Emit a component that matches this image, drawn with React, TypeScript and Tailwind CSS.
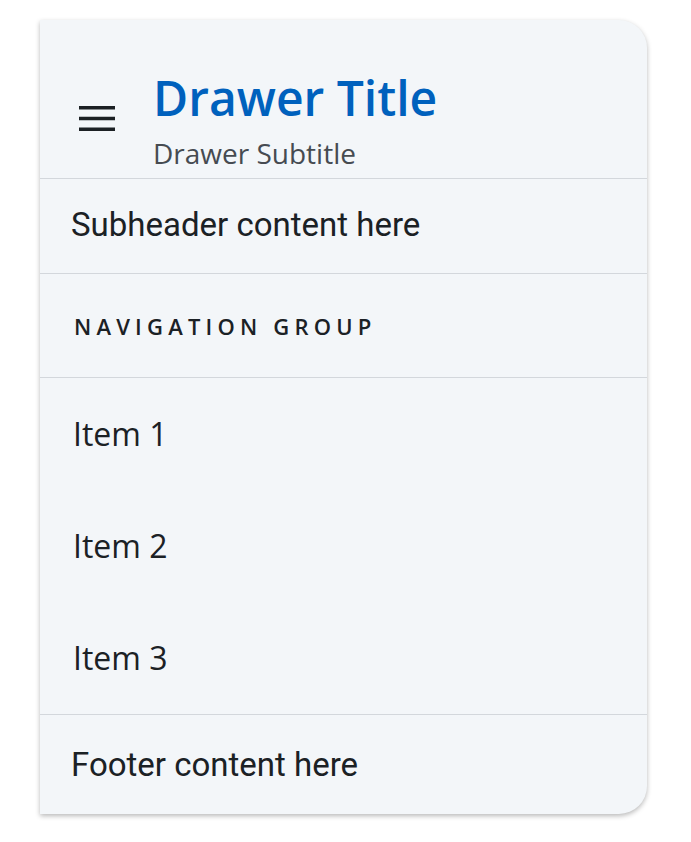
import React from "react";

function MenuIcon() {
  return (
    <svg width="36" height="25" viewBox="0 0 36 25" className="block">
      <rect x="0" y="0" width="36" height="3.5" fill="#1b2024" />
      <rect x="0" y="10.75" width="36" height="3.5" fill="#1b2024" />
      <rect x="0" y="21.5" width="36" height="3.5" fill="#1b2024" />
    </svg>
  );
}

export default function App() {
  const items = ["Item 1", "Item 2", "Item 3"];
  return (
    <div className="min-h-screen bg-white pt-[20px] pl-[40px]">
      <div className="w-[607px] bg-[#f3f6f9] rounded-r-[28px] shadow-[0_2px_5px_rgba(0,0,0,0.28)] flex flex-col">
        {/* Header */}
        <div className="flex items-start pt-[54px] pb-[11px] pl-[39px] border-b border-[#d3d7dc]">
          <div className="mt-[32px] mr-[38px]">
            <MenuIcon />
          </div>
          <div className="flex flex-col gap-[17px]">
            <div className="text-[48px] leading-none font-semibold text-[#0061bd] font-['Open_Sans',sans-serif]">
              Drawer Title
            </div>
            <div className="text-[28px] leading-none text-[#464b51] font-['Open_Sans',sans-serif]">
              Drawer Subtitle
            </div>
          </div>
        </div>
        {/* Subheader */}
        <div className="h-[95px] flex items-center pl-[31px] pb-[3px] border-b border-[#d3d7dc]">
          <span className="text-[33px] leading-none text-[#1b2125] font-['Roboto',sans-serif]">
            Subheader content here
          </span>
        </div>
        {/* Navigation group */}
        <div className="h-[104px] flex items-center pl-[34px] border-b border-[#d3d7dc]">
          <span className="text-[22px] leading-none font-semibold tracking-[5.2px] text-[#1b2125] font-['Open_Sans',sans-serif]">
            NAVIGATION GROUP
          </span>
        </div>
        {/* Items */}
        <div className="flex flex-col">
          {items.map((it) => (
            <div key={it} className="h-[112px] flex items-center pl-[33px]">
              <span className="text-[32px] leading-none text-[#1b2125] font-['Open_Sans',sans-serif]">
                {it}
              </span>
            </div>
          ))}
        </div>
        {/* Footer */}
        <div className="h-[100px] flex items-center pl-[31px] border-t border-[#d3d7dc]">
          <span className="text-[33px] leading-none text-[#1b2125] font-['Roboto',sans-serif]">
            Footer content here
          </span>
        </div>
      </div>
    </div>
  );
}
